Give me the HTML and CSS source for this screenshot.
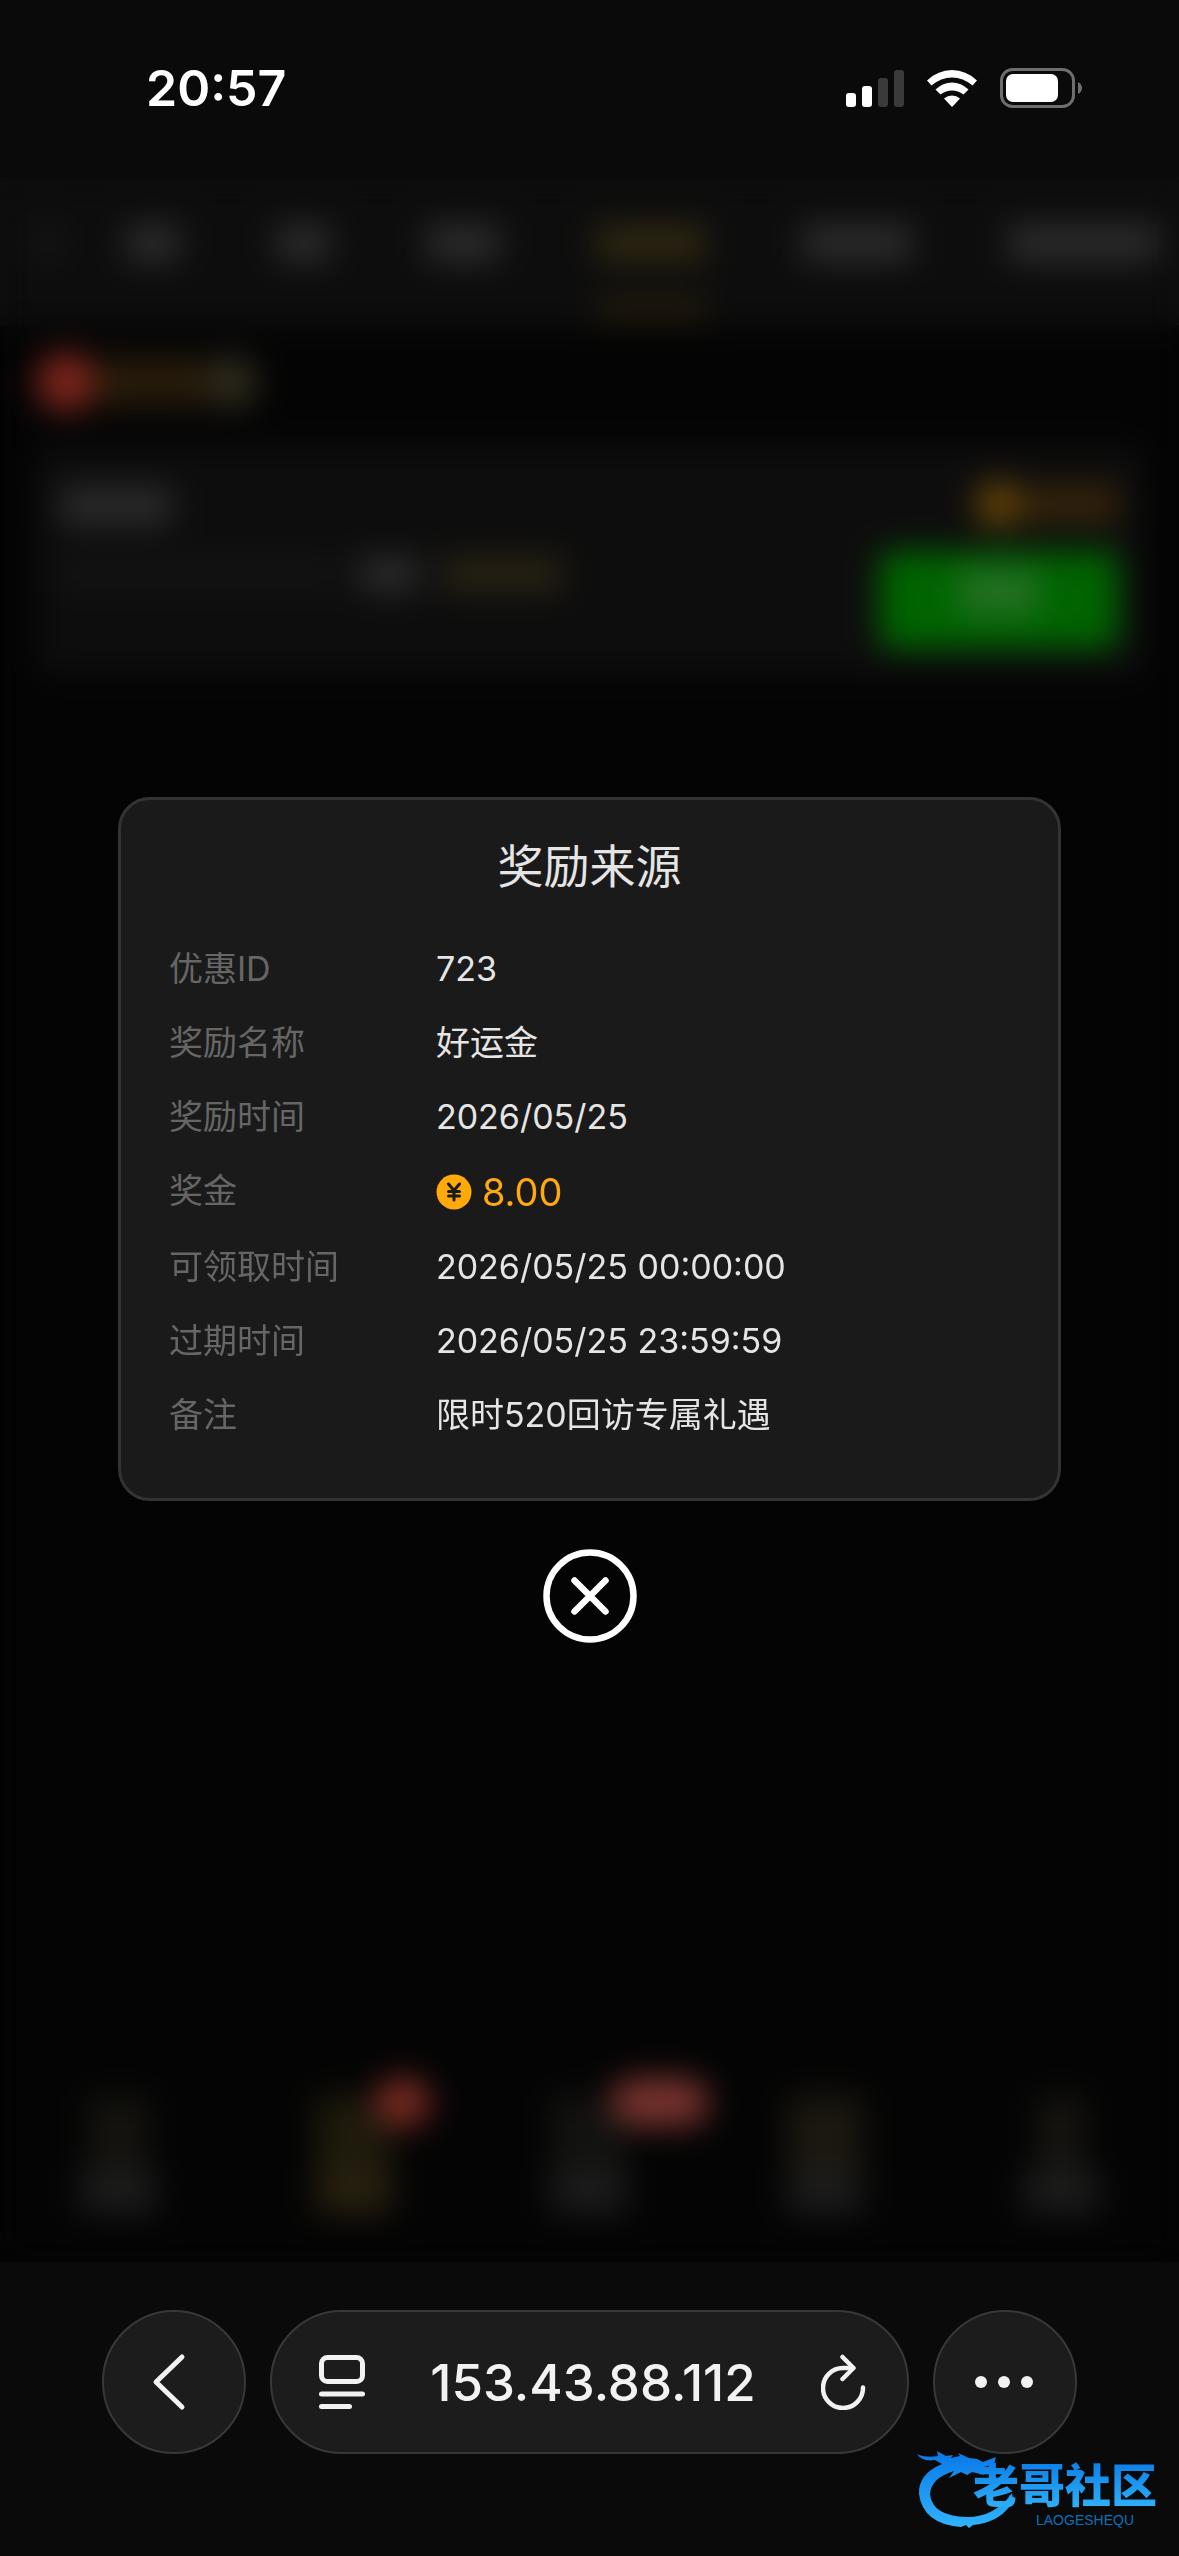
FILE: index.html
```
<!DOCTYPE html>
<html lang="zh-CN">
<head>
    <meta charset="UTF-8">
    <meta name="viewport" content="width=device-width, initial-scale=1.0">
    <title>奖励来源</title>
    <link rel="stylesheet" href="styles.css">
</head>
<body>
    <!-- 状态栏 -->
    <header class="status">
        <time class="clock">20:57</time>
        <div class="status-icons">
            <svg width="58" height="38" viewBox="0 0 58 38">
                <rect x="0" y="24" width="10" height="14" rx="3" fill="#fff"/>
                <rect x="16" y="17" width="10" height="21" rx="3" fill="#fff"/>
                <rect x="32" y="9" width="10" height="29" rx="3" fill="#3a3a3a"/>
                <rect x="48" y="1" width="10" height="37" rx="3" fill="#3a3a3a"/>
            </svg>
            <svg width="52" height="38" viewBox="0 0 52 38" fill="#fff">
                <path d="M1 11.5Q12 1 26 1T51 11.5L46.500 16.500Q37 8.500 26 8.500T5.500 16.500Z"/>
                <path d="M9.500 20.500Q17 13.500 26 13.500T42.500 20.500L37.500 25.500Q32 21.500 26 21.500T14.500 25.500Z"/>
                <path d="M18 29.500Q21.500 26.500 26 26.500T34 29.500L26.500 37.500Q26 38 25.500 37.500Z"/>
            </svg>
            <svg width="83" height="40" viewBox="0 0 83 40">
                <rect x="1.500" y="1.500" width="72" height="37" rx="11" fill="none" stroke="#6e6e6e" stroke-width="3"/>
                <rect x="6" y="6" width="52" height="28" rx="7" fill="#fff"/>
                <path d="M78 14Q82 16 82 20T78 26Z" fill="#6e6e6e"/>
            </svg>
        </div>
    </header>

    <main class="page">
        <!-- 弹层后面的页面 -->
        <nav class="tabs">
            <i class="tab back"></i>
            <i class="tab w2"></i>
            <i class="tab w2"></i>
            <i class="tab w3"></i>
            <i class="tab w4 active"></i>
            <i class="tab w4"></i>
            <i class="tab w5"></i>
        </nav>
        <div class="content">
            <div class="total">
                <i class="total-icon"></i>
                <i class="total-num"></i>
                <i class="total-refresh"></i>
            </div>
            <div class="card">
                <div class="card-left">
                    <i class="name"></i>
                    <div class="line">
                        <i class="date"></i>
                        <i class="rest"></i>
                        <i class="timer"></i>
                    </div>
                </div>
                <div class="card-right">
                    <div class="money">
                        <i class="money-icon"></i>
                        <i class="money-num"></i>
                    </div>
                    <div class="get"><i></i></div>
                </div>
            </div>
        </div>
        <nav class="menu">
            <div class="item"><i class="pic home"></i><i class="word"></i></div>
            <div class="item on"><i class="pic"></i><i class="word"></i><i class="dot"></i></div>
            <div class="item"><i class="pic"></i><i class="word"></i><i class="dot wide"></i></div>
            <div class="item"><i class="pic gold"></i><i class="word"></i></div>
            <div class="item"><i class="pic user"></i><i class="word"></i></div>
        </nav>

        <!-- 弹层 -->
        <div class="mask">
            <section class="dialog" role="dialog" aria-labelledby="title">
                <h1 class="title" id="title">奖励来源</h1>
                <dl class="info">
                    <dt>优惠ID</dt>
                    <dd>723</dd>
                    <dt>奖励名称</dt>
                    <dd>好运金</dd>
                    <dt>奖励时间</dt>
                    <dd>2026/05/25</dd>
                    <dt>奖金</dt>
                    <dd class="amount">
                        <svg width="36" height="36" viewBox="0 0 36 36">
                            <circle cx="18" cy="18" r="17.500" fill="#ffaa0a"/>
                            <path d="M12.500 10L18 16.500L23.500 10M18 16.500V26M12.500 17.500H23.500M12.500 22H23.500" fill="none" stroke="#1a1a1a" stroke-width="3" stroke-linecap="round"/>
                        </svg>
                        <span>8.00</span>
                    </dd>
                    <dt>可领取时间</dt>
                    <dd>2026/05/25 00:00:00</dd>
                    <dt>过期时间</dt>
                    <dd>2026/05/25 23:59:59</dd>
                    <dt>备注</dt>
                    <dd>限时520回访专属礼遇</dd>
                </dl>
            </section>
            <button class="close" type="button" aria-label="关闭">
                <svg width="94" height="94" viewBox="0 0 94 94" fill="none" stroke="#fff" stroke-width="6.500" stroke-linecap="round">
                    <circle cx="47" cy="47" r="43.500"/>
                    <path d="M31.500 31.500L62.500 62.500M62.500 31.500L31.500 62.500"/>
                </svg>
            </button>
        </div>
    </main>

    <!-- 浏览器工具栏 -->
    <footer class="browser">
        <button class="round" type="button" aria-label="返回">
            <svg width="60" height="60" viewBox="0 0 60 60" fill="none" stroke="#f2f2f2" stroke-width="5" stroke-linecap="round" stroke-linejoin="round">
                <path d="M38 5L12 30L38 55"/>
            </svg>
        </button>
        <div class="address">
            <button class="tool" type="button" aria-label="页面菜单">
                <svg width="46" height="54" viewBox="0 0 46 54" fill="none" stroke="#f2f2f2" stroke-width="5" stroke-linecap="round">
                    <rect x="2.500" y="2.500" width="41" height="24" rx="6"/>
                    <path d="M2.500 39H43.500M2.500 51.500H30.500"/>
                </svg>
            </button>
            <a class="url" href="#">153.43.88.112</a>
            <button class="tool" type="button" aria-label="刷新">
                <svg width="46" height="56" viewBox="0 0 46 56" fill="none" stroke="#f2f2f2" stroke-width="4.500" stroke-linecap="round" stroke-linejoin="round">
                    <path d="M42 33.500A20 20 0 1 1 22.500 14H32"/>
                    <path d="M21.500 3L32.500 14L21.500 25"/>
                </svg>
            </button>
        </div>
        <button class="round" type="button" aria-label="更多">
            <svg width="60" height="12" viewBox="0 0 60 12" fill="#f2f2f2">
                <circle cx="6" cy="6" r="6"/>
                <circle cx="29" cy="6" r="6"/>
                <circle cx="52" cy="6" r="6"/>
            </svg>
        </button>
        <!-- 水印 -->
        <div class="mark">
            <svg class="dragon" width="98" height="78" viewBox="0 0 98 78">
                <defs>
                    <linearGradient id="blue" x1="0" y1="0" x2="0" y2="1">
                        <stop offset="0" stop-color="#0878e8"/>
                        <stop offset="1" stop-color="#31b4fb"/>
                    </linearGradient>
                </defs>
                <path fill="url(#blue)" d="M0 4Q8 8 21 6L20 1L29 6L36 5L34 8L43 6L41 3L52 8L60 9L66 12L79 7L77 14L67 17L78 17L76 23L62 20L68 25L55 22L50 25L44 22L32 28L37 21Q14 28 13 44Q15 66 50 67Q78 67 95 43Q97 50 93 56Q80 73 56 75L52 78L49 75L44 77Q6 74 2 44Q1 24 25 14L18 10Q5 12 0 4Z"/>
            </svg>
            <div class="mark-text">
                <strong>老哥社区</strong>
                <small>LAOGESHEQU</small>
            </div>
        </div>
    </footer>
</body>
</html>
```
FILE: styles.css
```
*{
    margin: 0;
    padding: 0;
    box-sizing: border-box;
}
body{
    display: flex;
    flex-direction: column;
    min-height: 100vh;
    background-color: #0a0a0a;
    color: #e5e5e5;
    font-family: Inter, "Noto Sans CJK SC", sans-serif;
}
button{
    border: none;
    background: none;
    cursor: pointer;
}
svg,i{
    display: block;
    flex: none;
}
/* 状态栏 */
.status{
    display: flex;
    align-items: center;
    justify-content: space-between;
    height: 177px;
    padding: 0 96px 2px 146px;
}
.clock{
    color: #fff;
    font-size: 50px;
    font-weight: 600;
}
.status-icons{
    display: flex;
    align-items: center;
    gap: 22px;
}
/* 页面 */
.page{
    position: relative;
    flex: 1;
    display: flex;
    flex-direction: column;
    background-color: #040404;
}
.tabs{
    display: flex;
    align-items: center;
    height: 148px;
    padding: 0 16px 16px 38px;
    overflow: hidden;
    background-color: #0d0d0d;
}
.tab{
    height: 38px;
    background-color: #2b2b2b;
}
.tab + .tab{
    margin-left: 96px;
}
.back{
    width: 20px;
    background-color: #181818;
}
.back + .tab{
    margin-left: 68px;
}
.w2{
    width: 54px;
}
.w3{
    width: 74px;
}
.w4{
    width: 110px;
}
.w5{
    width: 150px;
}
.active{
    background-color: #2e2611;
    position: relative;
}
.active::after{
    content: "";
    position: absolute;
    left: 0;
    right: 0;
    top: 76px;
    height: 18px;
    background-color: #2b210c;
}
.content{
    flex: 1;
    padding: 28px 36px;
}
.total{
    display: flex;
    align-items: center;
    height: 58px;
}
.total-icon{
    width: 60px;
    height: 60px;
    border-radius: 50%;
    background-color: #7c241b;
}
.total-num{
    width: 108px;
    height: 48px;
    background-color: #281c0a;
}
.total-refresh{
    width: 54px;
    height: 54px;
    border-radius: 50%;
    background-color: #2e2a1c;
}
.card{
    display: flex;
    justify-content: space-between;
    margin-top: 34px;
    padding: 36px 24px 26px;
    border-radius: 20px;
    background-color: #0d0d0d;
}
.card-left{
    display: flex;
    flex-direction: column;
    gap: 32px;
    padding-top: 6px;
}
.name{
    width: 112px;
    height: 38px;
    background-color: #2b2b2b;
}
.line{
    display: flex;
    gap: 22px;
}
.line i{
    height: 34px;
}
.date{
    width: 276px;
    background-color: #131313;
}
.rest{
    width: 62px;
    background-color: #2b2b2b;
}
.timer{
    width: 120px;
    background-color: #292314;
}
.card-right{
    display: flex;
    flex-direction: column;
    align-items: flex-end;
    gap: 24px;
}
.money{
    display: flex;
    align-items: center;
}
.money-icon{
    width: 46px;
    height: 46px;
    border-radius: 50%;
    background-color: #634308;
}
.money-num{
    width: 98px;
    height: 36px;
    background-color: #36240a;
}
.get{
    display: flex;
    justify-content: center;
    width: 240px;
    height: 98px;
    padding-top: 18px;
    border-radius: 12px;
    background-color: #006400;
}
.get i{
    width: 80px;
    height: 46px;
    background-color: #246f24;
}
.menu{
    display: flex;
    justify-content: space-around;
    padding-bottom: 48px;
}
.item{
    position: relative;
    display: flex;
    flex-direction: column;
    align-items: center;
}
.pic{
    width: 76px;
    height: 74px;
    background-color: #121210;
}
.home{
    width: 60px;
    background-color: #14130f;
}
.gold{
    background-color: #1b180f;
}
.user{
    width: 48px;
    background-color: #151410;
}
.word{
    width: 76px;
    height: 44px;
    background-color: #1b1b1b;
}
.on .pic{
    background-color: #1e1a0c;
}
.on .word{
    background-color: #27200f;
}
.dot{
    position: absolute;
    left: 60px;
    top: -18px;
    width: 54px;
    height: 48px;
    border-radius: 24px;
    background-color: #7e2b23;
}
.wide{
    width: 98px;
    background-color: #78332e;
}
/* 弹层 */
.mask{
    position: absolute;
    inset: 0;
    display: flex;
    flex-direction: column;
    align-items: center;
    justify-content: center;
    gap: 48px;
    -webkit-backdrop-filter: blur(16px);
    backdrop-filter: blur(16px);
}
.dialog{
    width: 80%;
    padding: 34px 48px 46px;
    border: 3px solid #333;
    border-radius: 32px;
    background-color: #1a1a1a;
}
.title{
    margin-bottom: 34px;
    font-size: 46px;
    font-weight: 400;
    line-height: 64px;
    text-align: center;
}
.info{
    display: grid;
    grid-template-columns: 267px 1fr;
    font-size: 34px;
    line-height: 74px;
}
.info dt{
    color: #666;
}
.info .amount{
    display: flex;
    align-items: center;
    gap: 10px;
    color: #ffaa0a;
    font-size: 38px;
    line-height: 76px;
}
.close{
    display: block;
    border-radius: 50%;
}
/* 浏览器工具栏 */
.browser{
    position: relative;
    display: flex;
    gap: 24px;
    padding: 48px 102px 102px;
}
.round,.address{
    height: 144px;
    border: 2px solid #383838;
    border-radius: 72px;
    background-color: #1c1c1c;
}
.round{
    display: flex;
    align-items: center;
    justify-content: center;
    width: 144px;
    flex: none;
}
.address{
    flex: 1;
    display: flex;
    align-items: center;
    justify-content: space-between;
    padding: 0 40px 0 47px;
}
.url{
    color: #f2f2f2;
    font-size: 51px;
    font-weight: 500;
    text-decoration: none;
}
/* 右下角水印 */
.mark{
    position: absolute;
    right: 22px;
    bottom: 28px;
    display: flex;
    align-items: flex-end;
}
.dragon{
    margin-right: -42px;
}
.mark-text{
    display: flex;
    flex-direction: column;
    align-items: center;
}
.mark-text strong{
    font-size: 46px;
    font-weight: 900;
    line-height: 54px;
    color: transparent;
    background: linear-gradient(#0a7be6, #31b4fb);
    -webkit-background-clip: text;
    background-clip: text;
}
.mark-text small{
    padding-left: 40px;
    color: #0f6fb8;
    font-family: "Liberation Sans", sans-serif;
    font-size: 14px;
    line-height: 16px;
}
```
